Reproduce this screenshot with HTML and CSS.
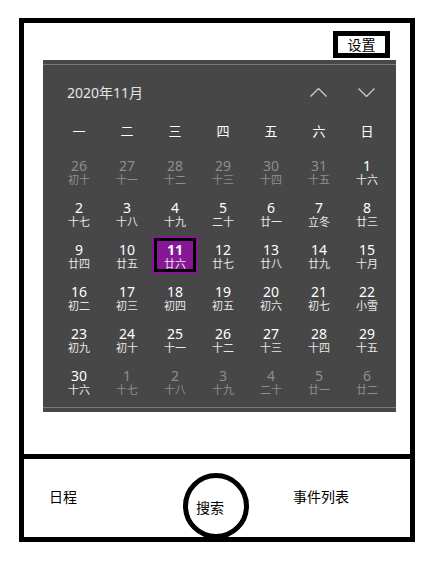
FILE: index.html
```html
<!DOCTYPE html>
<html lang="zh-CN">
<head>
    <meta charset="UTF-8">
    <meta name="viewport" content="width=device-width, initial-scale=1.0">
    <title>日历</title>
    <link rel="stylesheet" href="styles.css">
</head>
<body>

    <div class="frame">
        <!-- Top area: settings + calendar -->
        <div class="top">
            <div class="settings">设置</div>

            <div class="calendar">
                <div class="cal-line"></div>
                <div class="cal-header">
                    <span class="cal-title">2020年11月</span>
                    <div class="cal-nav">
                        <svg width="17" height="9" viewBox="0 0 17 9"><polyline points="0.5,8.5 8.5,0.5 16.5,8.5" fill="none" stroke="#d0d0d0" stroke-width="1.2"/></svg>
                        <svg width="17" height="9" viewBox="0 0 17 9"><polyline points="0.5,0.5 8.5,8.5 16.5,0.5" fill="none" stroke="#d0d0d0" stroke-width="1.2"/></svg>
                    </div>
                </div>

                <div class="weekdays">
                    <span>一</span><span>二</span><span>三</span><span>四</span><span>五</span><span>六</span><span>日</span>
                </div>

                <div class="days">
                    <div class="day dim"><b>26</b><i>初十</i></div>
                    <div class="day dim"><b>27</b><i>十一</i></div>
                    <div class="day dim"><b>28</b><i>十二</i></div>
                    <div class="day dim"><b>29</b><i>十三</i></div>
                    <div class="day dim"><b>30</b><i>十四</i></div>
                    <div class="day dim"><b>31</b><i>十五</i></div>
                    <div class="day"><b>1</b><i>十六</i></div>

                    <div class="day"><b>2</b><i>十七</i></div>
                    <div class="day"><b>3</b><i>十八</i></div>
                    <div class="day"><b>4</b><i>十九</i></div>
                    <div class="day"><b>5</b><i>二十</i></div>
                    <div class="day"><b>6</b><i>廿一</i></div>
                    <div class="day"><b>7</b><i>立冬</i></div>
                    <div class="day"><b>8</b><i>廿三</i></div>

                    <div class="day"><b>9</b><i>廿四</i></div>
                    <div class="day"><b>10</b><i>廿五</i></div>
                    <div class="day selected"><b>11</b><i>廿六</i></div>
                    <div class="day"><b>12</b><i>廿七</i></div>
                    <div class="day"><b>13</b><i>廿八</i></div>
                    <div class="day"><b>14</b><i>廿九</i></div>
                    <div class="day"><b>15</b><i>十月</i></div>

                    <div class="day"><b>16</b><i>初二</i></div>
                    <div class="day"><b>17</b><i>初三</i></div>
                    <div class="day"><b>18</b><i>初四</i></div>
                    <div class="day"><b>19</b><i>初五</i></div>
                    <div class="day"><b>20</b><i>初六</i></div>
                    <div class="day"><b>21</b><i>初七</i></div>
                    <div class="day"><b>22</b><i>小雪</i></div>

                    <div class="day"><b>23</b><i>初九</i></div>
                    <div class="day"><b>24</b><i>初十</i></div>
                    <div class="day"><b>25</b><i>十一</i></div>
                    <div class="day"><b>26</b><i>十二</i></div>
                    <div class="day"><b>27</b><i>十三</i></div>
                    <div class="day"><b>28</b><i>十四</i></div>
                    <div class="day"><b>29</b><i>十五</i></div>

                    <div class="day"><b>30</b><i>十六</i></div>
                    <div class="day dim"><b>1</b><i>十七</i></div>
                    <div class="day dim"><b>2</b><i>十八</i></div>
                    <div class="day dim"><b>3</b><i>十九</i></div>
                    <div class="day dim"><b>4</b><i>二十</i></div>
                    <div class="day dim"><b>5</b><i>廿一</i></div>
                    <div class="day dim"><b>6</b><i>廿二</i></div>
                </div>
                <div class="cal-line bottom"></div>
            </div>
        </div>

        <!-- Bottom navigation -->
        <div class="tabbar">
            <div class="tab first">日程</div>
            <div class="search">搜索</div>
            <div class="tab last">事件列表</div>
        </div>
    </div>

</body>
</html>
```

FILE: styles.css
```css
body {
    margin: 0;
    background-color: #ffffff;
    font-family: "Noto Sans", "Noto Sans CJK SC", sans-serif;
}
.frame {
    box-sizing: border-box;
    width: 396px;
    height: 524px;
    margin: 18px 0 0 19px;
    border: 5px solid #000;
    display: flex;
    flex-direction: column;
}
.top {
    height: 431px;
    display: flex;
    flex-direction: column;
}
.settings {
    box-sizing: border-box;
    width: 57px;
    height: 27px;
    margin: 8px 20px 0 auto;
    border: 5px solid #000;
    font-family: "Noto Sans CJK SC", sans-serif;
    font-size: 14px;
    line-height: 16px;
    text-align: center;
    color: #000;
}

/* Calendar */
.calendar {
    margin: 2px 14px 0 19px;
    height: 352px;
    background-color: #474747;
    padding-top: 4px;
    box-sizing: border-box;
    color: #fff;
}
.cal-line {
    height: 1px;
    background-color: #7a7a7a;
}
.cal-line.bottom {
    margin-top: 5px;
}
.cal-header {
    height: 54px;
    display: flex;
    align-items: center;
    padding: 0 21px 0 24px;
}
.cal-title {
    font-size: 14px;
    color: #e4e4e4;
    flex: 1;
}
.cal-nav {
    display: flex;
    gap: 31px;
}
.weekdays {
    display: grid;
    grid-template-columns: repeat(7, 48px);
    padding-left: 12px;
    height: 24px;
    line-height: 24px;
    font-family: "Noto Sans CJK SC", sans-serif;
    font-size: 13px;
    text-align: center;
}
.days {
    display: grid;
    grid-template-columns: repeat(7, 48px);
    grid-auto-rows: 42px;
    padding-left: 12px;
    margin-top: 7px;
}
.day {
    display: flex;
    flex-direction: column;
    align-items: center;
    justify-content: center;
    color: #fff;
}
.day b {
    font-weight: normal;
    font-size: 14px;
    line-height: 15px;
}
.day i {
    font-style: normal;
    font-family: "Noto Sans CJK SC", sans-serif;
    font-size: 11px;
    line-height: 12px;
    color: #e8e8e8;
}
.day.dim b,
.day.dim i {
    color: #8e8e8e;
}
.day.selected {
    box-sizing: border-box;
    width: 42px;
    height: 34px;
    margin: 4px 3px;
    background-color: #881798;
    border: 3px solid #000;
    box-shadow: 0 0 0 2px #881798;
}
.day.selected b {
    font-weight: bold;
}

/* Tab bar */
.tabbar {
    border-top: 5px solid #000;
    height: 78px;
    display: flex;
    align-items: center;
    font-family: "Noto Sans CJK SC", sans-serif;
    font-size: 14px;
    color: #000;
}
.tab {
    margin-top: -4px;
}
.tab.first {
    width: 134px;
    padding-left: 25px;
}
.tab.last {
    margin-left: 44px;
}
.search {
    box-sizing: border-box;
    width: 66px;
    height: 66px;
    border: 5px solid #000;
    border-radius: 50%;
    align-self: flex-start;
    margin-top: 14px;
    display: flex;
    align-items: center;
    justify-content: center;
    padding-right: 12px;
    padding-top: 2px;
}
```
